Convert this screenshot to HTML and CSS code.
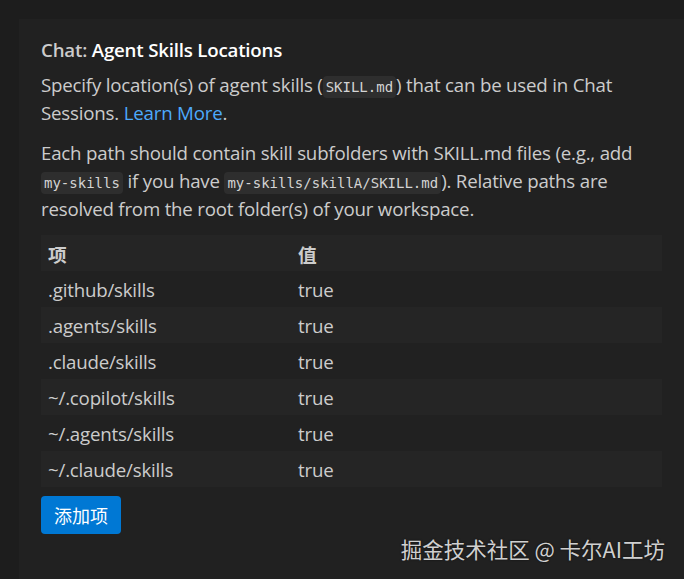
FILE: index.html
```html
<!DOCTYPE html>
<html lang="zh-CN">
<head>
<meta charset="utf-8">
<link rel="stylesheet" href="styles.css">
</head>
<body>
<div class="panel">
  <h1 class="title"><span class="cat">Chat: </span>Agent Skills Locations</h1>
  <p class="desc">Specify location(s) of agent skills (<code>SKILL.md</code>) that can be used in Chat Sessions. <a class="link" href="#">Learn More</a>.</p>
  <p class="desc">Each path should contain skill subfolders with SKILL.md files (e.g., add <code>my-skills</code> if you have <code>my-skills/skillA/SKILL.md</code>). Relative paths are resolved from the root folder(s) of your workspace.</p>
  <table class="tbl">
    <thead>
      <tr><th class="c1">项</th><th>值</th></tr>
    </thead>
    <tbody>
      <tr><td>.github/skills</td><td>true</td></tr>
      <tr><td>.agents/skills</td><td>true</td></tr>
      <tr><td>.claude/skills</td><td>true</td></tr>
      <tr><td>~/.copilot/skills</td><td>true</td></tr>
      <tr><td>~/.agents/skills</td><td>true</td></tr>
      <tr><td>~/.claude/skills</td><td>true</td></tr>
    </tbody>
  </table>
  <button class="btn">添加项</button>
</div>
<div class="watermark">掘金技术社区 @ 卡尔AI工坊</div>
</body>
</html>
```
FILE: styles.css
```css
html, body {
  margin: 0;
  padding: 0;
  height: 100%;
}
body {
  background: #1d1d1d;
  font-family: "Open Sans", "Noto Sans CJK SC", sans-serif;
  color: #cccccc;
  overflow: hidden;
  position: relative;
}
.panel {
  margin: 19px 0 0 19px;
  background: #212121;
  padding: 17px 22px 0 22px;
  height: calc(100vh - 19px);
  box-sizing: border-box;
}
.title {
  margin: 0;
  font-size: 18.7px;
  font-weight: 600;
  line-height: 28px;
  color: #ffffff;
  letter-spacing: -0.2px;
}
.cat {
  color: #cccccc;
}
.desc {
  margin: 7px 0 0 0;
  font-size: 18.7px;
  line-height: 28px;
  color: #cccccc;
  letter-spacing: -0.2px;
  max-width: 604px;
}
.desc + .desc {
  margin-top: 12px;
}
code {
  font-family: "DejaVu Sans Mono", monospace;
  font-size: 14px;
  line-height: 1;
  background: #2e2e2e;
  color: #d4d4d4;
  border-radius: 4px;
  padding: 3px 3px;
  letter-spacing: 0;
  white-space: nowrap;
}
.link {
  color: #4daafc;
  text-decoration: none;
}
.tbl {
  border-collapse: collapse;
  width: 621px;
  margin-top: 12px;
  font-size: 18.7px;
  letter-spacing: -0.2px;
}
.tbl th, .tbl td {
  height: 36px;
  padding: 0 7px;
  text-align: left;
  vertical-align: middle;
}
.tbl th {
  font-weight: 700;
  color: #cccccc;
}
.tbl .c1 {
  width: 236px;
}
.tbl thead tr {
  background: #252525;
}
.tbl tbody tr:nth-child(even) {
  background: #252525;
}
.btn {
  margin-top: 9px;
  background: #0078d4;
  color: #ffffff;
  border: none;
  border-radius: 4px;
  font-family: "Noto Sans CJK SC", sans-serif;
  font-size: 18px;
  padding: 0;
  height: 38px;
  width: 80px;
}
.watermark {
  position: absolute;
  right: 19px;
  top: 533px;
  font-family: "Noto Sans CJK SC", sans-serif;
  font-size: 21.5px;
  color: #d0d0d0;
  text-shadow: 0 0 2px rgba(0,0,0,0.6);
}
```
